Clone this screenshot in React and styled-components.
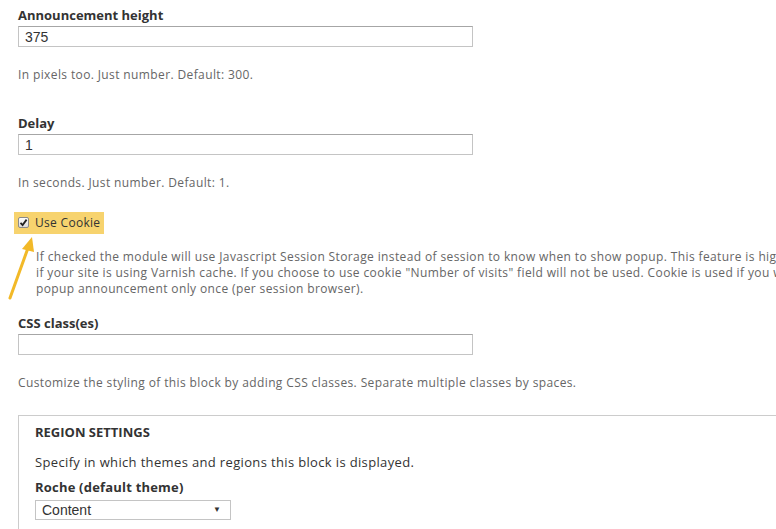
import React from "react";
import styled, { createGlobalStyle } from "styled-components";

const GlobalStyle = createGlobalStyle`
  html, body {
    margin: 0;
    padding: 0;
    background: #fff;
    overflow: hidden;
  }
  body {
    font-family: "Open Sans", "DejaVu Sans", sans-serif;
    color: #333;
  }
`;

const Page = styled.div`
  width: 776px;
  height: 529px;
  overflow: hidden;
  padding: 7px 0 0 18px;
  box-sizing: border-box;
  position: relative;
`;

const Field = styled.div`
  margin-top: ${props => props.top || 0}px;
`;

const Label = styled.label`
  display: block;
  font-size: 13px;
  font-weight: 700;
  color: #333;
  line-height: 17px;
  margin-bottom: 2px;
`;

const TextInput = styled.input`
  display: block;
  width: 455px;
  height: 21px;
  box-sizing: border-box;
  border: 1px solid #c4c4c4;
  border-top-color: #a6a6a6;
  padding: 0 6px;
  font-family: "Liberation Sans", Arial, sans-serif;
  font-size: 14px;
  color: #333;
  outline: none;
`;

const Help = styled.div`
  font-size: 12px;
  letter-spacing: 0.38px;
  color: #666;
  line-height: 16px;
  margin-top: ${props => props.top || 20}px;
  margin-left: ${props => props.indent || 0}px;
  white-space: nowrap;
`;

const CheckRow = styled.div`
  display: inline-flex;
  align-items: center;
  gap: 6px;
  background: #f7d36e;
  padding: 0 4px;
  margin-left: -4px;
  height: 22px;
  box-sizing: border-box;
`;

const Box = styled.span`
  width: 11px;
  height: 11px;
  border: 1px solid #8a8a8a;
  border-radius: 2px;
  background: linear-gradient(#fdfdfd, #dcdcdc);
  display: flex;
  align-items: center;
  justify-content: center;
  box-sizing: border-box;
`;

const CheckText = styled.span`
  font-size: 12px;
  letter-spacing: 0.3px;
  color: #333;
`;

const Arrow = styled.svg`
  position: absolute;
  left: 4px;
  top: 234px;
`;

const Fieldset = styled.div`
  margin-top: 24px;
  border: 1px solid #ccc;
  border-right: none;
  border-bottom: none;
  padding: 8px 0 30px 16px;
`;

const Legend = styled.div`
  font-size: 13px;
  font-weight: 700;
  color: #333;
  text-transform: uppercase;
  line-height: 17px;
`;

const Desc = styled.div`
  font-size: 13px;
  letter-spacing: 0.35px;
  color: #333;
  margin-top: 12px;
  line-height: 18px;
`;

const SubLabel = styled.div`
  font-size: 13px;
  letter-spacing: 0.2px;
  font-weight: 700;
  color: #333;
  margin-top: 7px;
  line-height: 18px;
`;

const Select = styled.div`
  margin-top: 4px;
  width: 196px;
  height: 20px;
  box-sizing: border-box;
  border: 1px solid #c4c4c4;
  display: flex;
  align-items: center;
  justify-content: space-between;
  padding: 0 9px 0 6px;
  font-family: "Liberation Sans", Arial, sans-serif;
  font-size: 14px;
  color: #333;
`;

const Caret = styled.span`
  font-size: 8px;
  color: #333;
`;

export default function App() {
  return (
    <>
      <GlobalStyle />
      <Page>
        <Field>
          <Label>Announcement height</Label>
          <TextInput defaultValue="375" />
          <Help top={20}>In pixels too. Just number. Default: 300.</Help>
        </Field>
        <Field top={32}>
          <Label>Delay</Label>
          <TextInput defaultValue="1" />
          <Help top={20}>In seconds. Just number. Default: 1.</Help>
        </Field>
        <Field top={19}>
          <CheckRow>
            <Box>
              <svg width="9" height="9" viewBox="0 0 9 9">
                <path d="M1.5 4.8 L3.6 7 L7.6 1.6" fill="none" stroke="#222" strokeWidth="1.8" />
              </svg>
            </Box>
            <CheckText>Use Cookie</CheckText>
          </CheckRow>
          <Help top={15} indent={18}>
            If checked the module will use Javascript Session Storage instead of session to know when to show popup. This feature is highly recommended
            <br />
            if your site is using Varnish cache. If you choose to use cookie "Number of visits" field will not be used. Cookie is used if you want to show
            <br />
            popup announcement only once (per session browser).
          </Help>
        </Field>
        <Field top={18}>
          <Label>CSS class(es)</Label>
          <TextInput />
          <Help top={20}>Customize the styling of this block by adding CSS classes. Separate multiple classes by spaces.</Help>
        </Field>
        <Fieldset>
          <Legend>Region settings</Legend>
          <Desc>Specify in which themes and regions this block is displayed.</Desc>
          <SubLabel>Roche (default theme)</SubLabel>
          <Select>
            Content
            <Caret>▼</Caret>
          </Select>
        </Fieldset>
        <Arrow width="40" height="70" viewBox="0 0 40 70">
          <path d="M6 64 L24 14" stroke="#f2b928" strokeWidth="3" strokeLinecap="round" />
          <path d="M28 3 L18 15 L30 18 Z" fill="#f2b928" />
        </Arrow>
      </Page>
    </>
  );
}
